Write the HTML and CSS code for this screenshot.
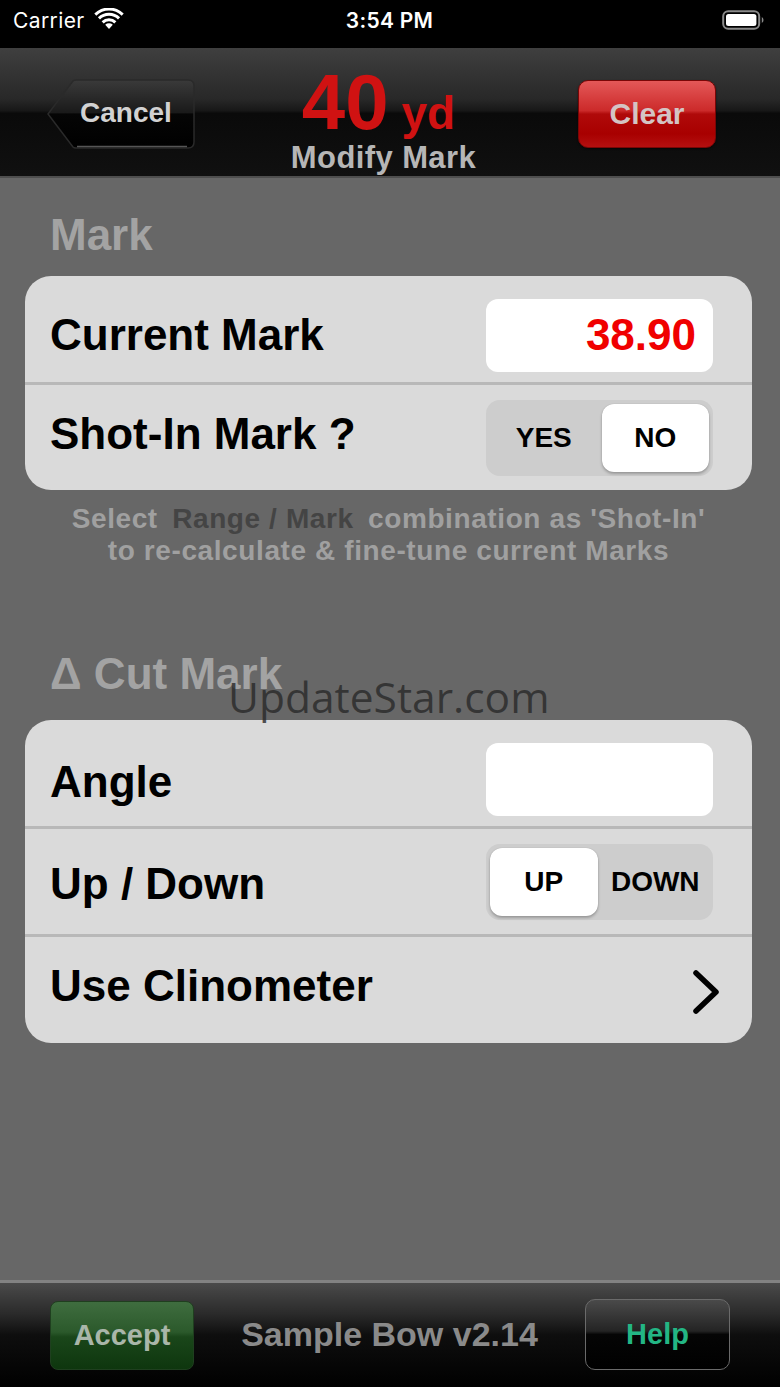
FILE: index.html
```html
<!DOCTYPE html>
<html>
<head>
<meta charset="utf-8">
<link rel="stylesheet" href="styles.css">
</head>
<body>
<div class="screen">
  <div class="status">
    <div class="status-left">
      <span class="carrier">Carrier</span>
      <svg class="wifi" width="30" height="22" viewBox="0 0 30 22">
        <path d="M15 21 L11.2 16.8 A5.6 5.6 0 0 1 18.8 16.8 Z" fill="#fff"/>
        <path d="M7.6 13.2 A10.6 10.6 0 0 1 22.4 13.2 L20.3 15.5 A7.5 7.5 0 0 0 9.7 15.5 Z" fill="#fff"/>
        <path d="M3.9 9.3 A15.8 15.8 0 0 1 26.1 9.3 L24 11.5 A12.7 12.7 0 0 0 6 11.5 Z" fill="#fff"/>
        <path d="M0.3 5.5 A21 21 0 0 1 29.7 5.5 L27.7 7.7 A18 18 0 0 0 2.3 7.7 Z" fill="#fff"/>
      </svg>
    </div>
    <div class="time">3:54 PM</div>
    <div class="status-right">
      <svg width="44" height="22" viewBox="0 0 44 22">
        <rect x="1.2" y="2.2" width="36" height="17.6" rx="5" fill="none" stroke="#8a8a8a" stroke-width="2"/>
        <rect x="4" y="5" width="30.4" height="12" rx="2.5" fill="#fff"/>
        <path d="M39.8 8 A3.5 3.5 0 0 1 39.8 14 Z" fill="#8a8a8a"/>
      </svg>
    </div>
  </div>

  <div class="navbar">
    <button class="cancel-btn">
      <svg class="cancel-shape" width="148" height="70" viewBox="0 0 148 70">
        <defs>
          <linearGradient id="cg" x1="0" y1="0" x2="0" y2="1">
            <stop offset="0" stop-color="#3a3a3a"/>
            <stop offset="0.48" stop-color="#1a1a1a"/>
            <stop offset="0.5" stop-color="#050505"/>
            <stop offset="1" stop-color="#000"/>
          </linearGradient>
        </defs>
        <path d="M1 35 L26 2 Q27 1 29 1 L141 1 Q147 1 147 7 L147 63 Q147 69 141 69 L29 69 Q27 69 26 68 Z" fill="url(#cg)" stroke="#2a2a2a" stroke-width="1.5"/>
        <path d="M30 67.5 L140 67.5" stroke="#555" stroke-width="1.5"/>
      </svg>
      <span class="cancel-text">Cancel</span>
    </button>
    <div class="title">
      <div class="title-range"><span class="range-num">40</span><span class="range-unit">yd</span></div>
      <div class="title-sub">Modify Mark</div>
    </div>
    <button class="clear-btn">Clear</button>
  </div>

  <div class="content">
    <div class="section-title">Mark</div>
    <div class="card">
      <div class="row row-first">
        <span class="label">Current Mark</span>
        <div class="input"><span class="value">38.90</span></div>
      </div>
      <div class="divider"></div>
      <div class="row">
        <span class="label label-up">Shot-In Mark ?</span>
        <div class="segmented">
          <div class="seg">YES</div>
          <div class="seg seg-on">NO</div>
        </div>
      </div>
    </div>
    <div class="helper">
      <div>Select <span class="helper-dark">Range / Mark</span> combination as 'Shot-In'</div>
      <div>to re-calculate &amp; fine-tune current Marks</div>
    </div>

    <div class="section-title section-cut">Δ Cut Mark</div>
    <div class="watermark">UpdateStar.com</div>
    <div class="card">
      <div class="row row-first">
        <span class="label label-down">Angle</span>
        <div class="input"></div>
      </div>
      <div class="divider"></div>
      <div class="row">
        <span class="label label-down">Up / Down</span>
        <div class="segmented">
          <div class="seg seg-on">UP</div>
          <div class="seg">DOWN</div>
        </div>
      </div>
      <div class="divider"></div>
      <div class="row row-last">
        <span class="label label-up">Use Clinometer</span>
        <svg class="chevron" width="32" height="48" viewBox="0 0 32 48">
          <path d="M6 5 L26 24 L6 43" fill="none" stroke="#000" stroke-width="5.5" stroke-linecap="round" stroke-linejoin="round"/>
        </svg>
      </div>
    </div>
  </div>

  <div class="bottombar">
    <button class="accept-btn">Accept</button>
    <div class="bow-name">Sample Bow v2.14</div>
    <button class="help-btn">Help</button>
  </div>
</div>
</body>
</html>
```

FILE: styles.css
```css
* { box-sizing: border-box; }
html, body { margin: 0; padding: 0; }
body {
  width: 780px;
  height: 1387px;
  background: #676767;
  font-family: "Liberation Sans", Arial, sans-serif;
  overflow: hidden;
}
.screen {
  width: 780px;
  height: 1387px;
  display: flex;
  flex-direction: column;
}

/* status bar */
.status {
  height: 48px;
  background: #000;
  color: #fff;
  display: grid;
  grid-template-columns: 1fr auto 1fr;
  align-items: center;
  padding: 0 14px 8px 13px;
  font-family: Inter, "Noto Sans", sans-serif;
  font-size: 21px;
}
.status-left { display: flex; align-items: center; gap: 9px; }
.carrier { font-weight: 400; letter-spacing: 0.4px; }
.wifi { margin-top: -2px; }
.time { font-weight: 600; letter-spacing: 0.3px; }
.status-right { display: flex; justify-content: flex-end; }

/* nav bar */
.navbar {
  height: 130px;
  background: linear-gradient(#3f3f3f 0%, #282828 40%, #171717 49%, #0a0a0a 51%, #101010 100%);
  border-bottom: 2px solid #4e4e4e;
  display: grid;
  grid-template-columns: 148px 1fr 138px;
  align-items: center;
  padding: 0 64px 0 47px;
}
.cancel-btn {
  position: relative;
  width: 148px;
  height: 70px;
  padding: 0 0 0 10px;
  border: 0;
  background: none;
  display: flex;
  align-items: center;
  justify-content: center;
  margin-top: 4px;
}
.cancel-shape { position: absolute; left: 0; top: 0; }
.cancel-text {
  position: relative;
  font-family: "Liberation Sans", Arial, sans-serif;
  font-weight: 700;
  font-size: 28px;
  color: #d2d2d2;
  margin-top: -2px;
}
.title {
  display: flex;
  flex-direction: column;
  align-items: center;
  margin-top: 14px;
  margin-right: 6px;
}
.title-range {
  display: flex;
  align-items: baseline;
  gap: 13px;
  color: #d01212;
  font-weight: 700;
  line-height: 1;
  margin-left: -10px;
}
.range-num { font-size: 78px; }
.range-unit { font-size: 46px; }
.title-sub {
  color: #b6b6b6;
  font-weight: 700;
  font-size: 31px;
  line-height: 34px;
  letter-spacing: 0.4px;
}
.clear-btn {
  width: 138px;
  height: 68px;
  border-radius: 10px;
  border: 1px solid #7a0606;
  background: linear-gradient(#e45858 0%, #cc2a2a 45%, #b00a0a 50%, #a80000 80%, #b41010 100%);
  color: #d4c4c4;
  font-family: "Liberation Sans", Arial, sans-serif;
  font-weight: 700;
  font-size: 30px;
  box-shadow: 0 1px 2px rgba(0,0,0,0.6);
  margin-top: 4px;
}

/* content */
.content {
  flex: 1;
  position: relative;
  padding: 0 28px 0 25px;
}
.section-title {
  font-weight: 700;
  font-size: 44px;
  line-height: 48px;
  color: #a3a3a3;
  padding-left: 25px;
  margin: 33px 0 17px;
}
.section-cut { margin: 83px 0 22px; }
.watermark {
  position: absolute;
  left: 228px;
  top: 489px;
  font-family: "Open Sans", "DejaVu Sans", sans-serif;
  font-size: 42.5px;
  line-height: 60px;
  color: rgba(40,40,40,0.78);
}
.card {
  background: #dadada;
  border-radius: 26px;
  overflow: hidden;
}
.row {
  height: 105px;
  display: flex;
  align-items: center;
  justify-content: space-between;
  padding: 0 39px 0 25px;
}
.row-first { height: 106px; padding-top: 12px; }
.row-last { height: 106px; padding-right: 30px; }
.divider {
  height: 3px;
  background: #b8b8b8;
}
.label {
  font-weight: 700;
  font-size: 44px;
  color: #000;
}
.label-up { margin-top: -8px; }
.label-down { margin-top: 5px; }
.input {
  width: 227px;
  height: 73px;
  background: #fff;
  border-radius: 12px;
  display: flex;
  align-items: center;
  justify-content: flex-end;
  padding-right: 17px;
}
.value {
  color: #f00000;
  font-weight: 700;
  font-size: 44px;
}
.segmented {
  width: 227px;
  height: 76px;
  background: #cdcdcd;
  border-radius: 14px;
  padding: 4px;
  display: grid;
  grid-template-columns: 1fr 1fr;
  gap: 4px;
}
.seg {
  display: flex;
  align-items: center;
  justify-content: center;
  font-weight: 700;
  font-size: 28px;
  color: #000;
  border-radius: 12px;
}
.seg-on {
  background: #fff;
  box-shadow: 0 2px 3px rgba(0,0,0,0.25), 0 0 1px rgba(0,0,0,0.2);
}
.chevron { margin-top: 4px; }
.helper {
  margin-top: 13px;
  text-align: center;
  color: #a0a0a0;
  font-weight: 700;
  font-size: 28px;
  line-height: 32px;
  letter-spacing: 0.6px;
}
.helper-dark { color: #444444; margin: 0 6px; }

/* bottom bar */
.bottombar {
  height: 107px;
  border-top: 3px solid #828282;
  background: linear-gradient(#4a4a4a 0%, #2a2a2a 30%, #0e0e0e 50%, #000 100%);
  display: grid;
  grid-template-columns: 144px 1fr 145px;
  align-items: center;
  padding: 0 50px 2px 50px;
}
.accept-btn {
  height: 69px;
  border-radius: 8px;
  border: 1px solid #1f3f1f;
  background: linear-gradient(#3f6d3f 0%, #2b592b 45%, #1a461a 52%, #0e360e 100%);
  color: #a9b6a9;
  font-family: "Liberation Sans", Arial, sans-serif;
  font-weight: 700;
  font-size: 29px;
  margin-top: 2px;
}
.bow-name {
  text-align: center;
  color: #8a8a8a;
  font-weight: 700;
  font-size: 34px;
  letter-spacing: 0px;
}
.help-btn {
  height: 71px;
  border-radius: 10px;
  border: 1.5px solid #6a6a6a;
  background: linear-gradient(#4a4a4a 0%, #242424 45%, #050505 50%, #000 100%);
  color: #23b684;
  font-family: "Liberation Sans", Arial, sans-serif;
  font-weight: 700;
  font-size: 29px;
}
```
